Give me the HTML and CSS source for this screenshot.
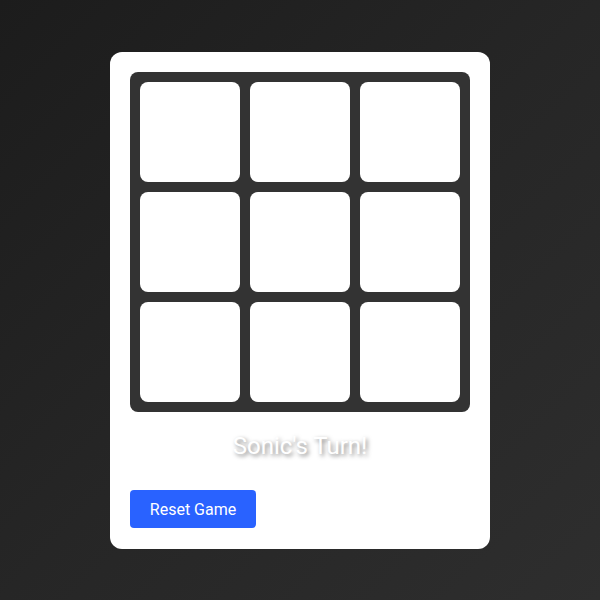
FILE: index.html
```html
<!DOCTYPE html>
<html>
<head>
<meta charset="utf-8">
<link rel="stylesheet" href="styles.css">
</head>
<body>
<div class="card">
  <div class="board">
    <div class="cell"></div><div class="cell"></div><div class="cell"></div>
    <div class="cell"></div><div class="cell"></div><div class="cell"></div>
    <div class="cell"></div><div class="cell"></div><div class="cell"></div>
  </div>
  <div class="status">Sonic's Turn!</div>
  <button class="reset">Reset Game</button>
</div>
</body>
</html>
```
FILE: styles.css
```css
html, body {
  margin: 0;
  padding: 0;
  height: 100%;
}
body {
  background: linear-gradient(135deg, #1c1c1c 0%, #262626 50%, #2e2e2e 100%);
  font-family: Roboto, "Liberation Sans", sans-serif;
  display: flex;
  justify-content: center;
  align-items: flex-start;
}
.card {
  margin-top: 52px;
  width: 340px;
  padding: 20px 20px 21px;
  background: #fff;
  border-radius: 12px;
}
.board {
  display: grid;
  grid-template-columns: repeat(3, 100px);
  grid-template-rows: repeat(3, 100px);
  gap: 10px;
  padding: 10px;
  background: #333333;
  border-radius: 8px;
}
.cell {
  background: #fff;
  border-radius: 8px;
}
.status {
  margin: 20px 0 30px;
  text-align: center;
  color: #fff;
  font-size: 24px;
  line-height: 28px;
  text-shadow: 2px 2px 4px rgba(0,0,0,0.5);
}
.reset {
  display: block;
  height: 38px;
  width: 126px;
  padding: 0;
  border: none;
  border-radius: 4px;
  background: #2962ff;
  color: #fff;
  font-family: Roboto, "Liberation Sans", sans-serif;
  font-size: 16px;
}
```
